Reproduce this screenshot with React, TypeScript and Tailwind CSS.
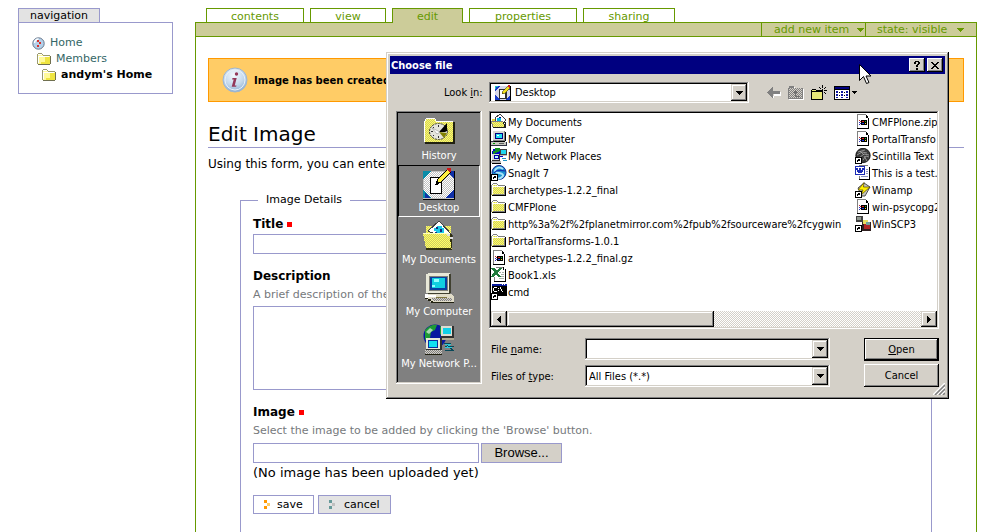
import type { ReactNode } from 'react';

const SUNKEN =
  'p-[2px] shadow-[inset_-1px_-1px_#fff,inset_1px_1px_#808080,inset_-2px_-2px_#d4d0c8,inset_2px_2px_#000]';
const RAISED =
  'bg-[#d4d0c8] shadow-[inset_-1px_-1px_#000,inset_1px_1px_#fff,inset_-2px_-2px_#808080]';
const RAISED_SOFT =
  'bg-[#d4d0c8] shadow-[inset_-1px_-1px_#000,inset_1px_1px_#d4d0c8,inset_-2px_-2px_#808080,inset_2px_2px_#fff]';

type IconProps = { size?: number; height?: number; className?: string; children: ReactNode };

function Icon({ size = 16, height, className = '', children }: IconProps) {
  const h = height ?? size;
  return (
    <svg
      width={size}
      height={h}
      viewBox={`0 0 ${size} ${h}`}
      shapeRendering="crispEdges"
      className={`shrink-0 ${className}`}
      aria-hidden="true"
    >
      {children}
    </svg>
  );
}

function SharedPatterns() {
  return (
    <svg width="0" height="0" className="absolute" aria-hidden="true">
      <defs>
        <pattern id="yellowDither" width="2" height="2" patternUnits="userSpaceOnUse">
          <rect width="2" height="2" fill="#ffff66" />
          <rect width="1" height="1" fill="#d0cc60" />
          <rect x="1" y="1" width="1" height="1" fill="#d0cc60" />
        </pattern>
        <pattern id="greyDither" width="2" height="2" patternUnits="userSpaceOnUse">
          <rect width="2" height="2" fill="#fff" />
          <rect width="1" height="1" fill="#c0c0c0" />
          <rect x="1" y="1" width="1" height="1" fill="#c0c0c0" />
        </pattern>
        <pattern id="trackDither" width="2" height="2" patternUnits="userSpaceOnUse">
          <rect width="2" height="2" fill="#fff" />
          <rect width="1" height="1" fill="#d4d0c8" />
          <rect x="1" y="1" width="1" height="1" fill="#d4d0c8" />
        </pattern>
        <pattern id="darkDither" width="2" height="2" patternUnits="userSpaceOnUse">
          <rect width="2" height="2" fill="#808080" />
          <rect width="1" height="1" fill="#d4d0c8" />
          <rect x="1" y="1" width="1" height="1" fill="#d4d0c8" />
        </pattern>
      </defs>
    </svg>
  );
}

/* ---------- site icons ---------- */

function SiteHomeIcon() {
  return (
    <svg width="13" height="13" viewBox="0 0 13 13" className="shrink-0" aria-hidden="true">
      <circle cx="6.5" cy="6.5" r="5.7" fill="#b4d0ea" stroke="#67778b" />
      <path d="M2.5 6a4 4 0 0 1 4-4" stroke="#fff" strokeWidth="1.5" fill="none" />
      <path
        d="M5 3h2v2H5zM7 5h2v2H7zM5 8h2v2H5z"
        fill="#d8322c"
        shapeRendering="crispEdges"
      />
    </svg>
  );
}

function SiteFolderIcon() {
  return (
    <Icon size={14} height={12}>
      <path d="M1 1h4v1h1v1h7v8H1z" fill="#fffa9a" />
      <path d="M8 4h5v7H4v-2h4z" fill="#efe540" />
      <path d="M1 0h4v1H1zM0 1h1v10H0zM5 1h1v1H5zM6 2h7v1H6z" fill="#9a9a70" />
      <path d="M13 3h1v8h-1zM1 11h12v1H1z" fill="#707050" />
      <path d="M1 1h4v1H1zM1 3h11v1H1zM1 3h1v7H1z" fill="#fff" />
    </Icon>
  );
}

function InfoIcon() {
  return (
    <svg width="26" height="26" viewBox="0 0 26 26" className="shrink-0" aria-hidden="true">
      <defs>
        <radialGradient id="infoGlass" cx="45%" cy="30%" r="70%">
          <stop offset="0" stopColor="#f4f9fe" />
          <stop offset="0.6" stopColor="#c5d9ec" />
          <stop offset="1" stopColor="#8eb0d4" />
        </radialGradient>
      </defs>
      <circle cx="13" cy="13" r="12" fill="url(#infoGlass)" stroke="#9fb6cf" />
      <circle cx="13" cy="13" r="10" fill="none" stroke="#e8f1f9" />
      <circle cx="14.5" cy="7" r="1.7" fill="#93385a" />
      <path d="M10.5 11h4.200l-2 7.500h1.800l-.4 1.300h-4.400l2-7.400h-1.600z" fill="#93385a" />
    </svg>
  );
}

function SubmitMark({ dark, light }: { dark: string; light: string }) {
  return (
    <Icon size={6} height={9}>
      <path d="M0 0h3v3H0zM0 6h3v3H0z" fill={dark} />
      <path d="M3 3h3v3H3z" fill={light} />
    </Icon>
  );
}

function DownArrow({ className = '' }: { className?: string }) {
  return (
    <Icon size={7} height={4} className={className}>
      <path d="M0 0h7v1H0zM1 1h5v1H1zM2 2h3v1H2zM3 3h1v1H3z" fill="currentColor" />
    </Icon>
  );
}

/* ---------- small file icons ---------- */

function FolderIcon() {
  return (
    <Icon>
      <path d="M2 3h4v1h1v1h7v8H1V4h1z" fill="url(#yellowDither)" />
      <path d="M2 1h4v1H2zM1 2h1v1H1zM6 2h1v1H6zM0 3h1v10H0zM7 3h7v1H7z" fill="#808080" />
      <path d="M2 2h4v1H2zM1 4h13v1H1zM1 4h1v8H1z" fill="#fff" />
      <path d="M14 4h1v10h-1zM1 13h14v1H1z" fill="#000" />
      <path d="M13 5h1v8h-1zM2 12h12v1H2z" fill="#808080" />
    </Icon>
  );
}

function DocumentsIcon() {
  return (
    <Icon>
      <path d="M4 4l5-4 6 6-4 5H5z" fill="#fff" stroke="#404040" />
      <path d="M6 4h4v3H6z" fill="#00b4e6" />
      <path d="M8 3h2v1H8zM7 7h2v1H7z" fill="#000080" />
      <path d="M1 5h3v2H1z" fill="#e8d838" />
      <path d="M0 7h12l3 7H3z" fill="url(#yellowDither)" />
      <path d="M0 7h12v1H0zM0 7h1v3H0zM1 10h1v3H1z" fill="#808080" />
      <path d="M2 13h13v1H2zM12 8h1v2h-1zM13 10h1v3h-1zM14 8h1v6h-1z" fill="#202020" />
    </Icon>
  );
}

function ComputerIcon() {
  return (
    <Icon>
      <path d="M2 0h12v10H2z" fill="#808080" />
      <path d="M2 0h11v9H2z" fill="#d8d8d0" />
      <path d="M4 2h8v6H4z" fill="#000080" />
      <path d="M5 3h6v4H5z" fill="#20e0f0" />
      <path d="M6 4h2v1H6z" fill="#fff" />
      <path d="M14 1h1v9h-1zM3 10h11v1H3z" fill="#000" />
      <path d="M0 11h15v3H0z" fill="#c8c8c0" />
      <path d="M0 10h3v1H0zM0 14h15v1H0zM15 11h1v4h-1z" fill="#303040" />
      <path d="M8 12h5v1H8z" fill="#606060" />
      <path d="M2 12h2v1H2z" fill="#00a000" />
    </Icon>
  );
}

function NetworkIcon() {
  return (
    <Icon>
      <path d="M4 0h5v1h2v3h1v5H3V8H1V3h1V1h2z" fill="#0000c8" />
      <path d="M4 0h5v1h1v2H8v1H6v1H4v2H2V3h2z" fill="#109020" />
      <path d="M9 1h7v7H9z" fill="#404040" />
      <path d="M10 2h5v4h-5z" fill="#20d8f0" />
      <path d="M9 7h7v1H9z" fill="#c0c0c0" />
      <path d="M1 6h8v7H1z" fill="#303030" />
      <path d="M1 6h7v6H1z" fill="#d8d8d8" />
      <path d="M3 7h5v4H3z" fill="#0000a0" />
      <path d="M4 8h3v2H4z" fill="#b8f8ff" />
      <path d="M0 13h10v2H0z" fill="#b0b0b0" />
      <path d="M1 15h9v1H1z" fill="#000" />
      <path d="M11 10h4v1h-4zM12 12h4v1h-4z" fill="#2090c0" />
    </Icon>
  );
}

function ShortcutMark() {
  return (
    <>
      <path d="M0 9h7v7H0z" fill="#000" />
      <path d="M1 10h5v5H1z" fill="#fff" />
      <path d="M3 11h2v2H4v-1H3zM2 12h2v1H3v1H2z" fill="#000" />
    </>
  );
}

function SnagItIcon() {
  return (
    <Icon>
      <g shapeRendering="auto">
        <circle cx="8" cy="7.5" r="7" fill="#1c8fd0" stroke="#102a90" />
        <path d="M12 4Q8 1 5 4t3 4 3 4-7 1" fill="none" stroke="#a8e4f8" strokeWidth="2" />
        <path d="M3 8Q6 4 14 6" stroke="#1030b0" strokeWidth="1.2" fill="none" />
      </g>
      <ShortcutMark />
    </Icon>
  );
}

function PageShape() {
  return (
    <>
      <path d="M2 0h9l3 3v12H2z" fill="#fff" />
      <path d="M2 0h9v1H2zM2 0h1v15H2z" fill="#808080" />
      <path d="M13 3h1v12h-1zM2 14h12v1H2zM10 0h1v4h3v-1h-1V2h-1V1h-1V0z" fill="#000" />
    </>
  );
}

function ArchiveIcon() {
  return (
    <Icon>
      <PageShape />
      <path d="M6 6h6v5H6z" fill="#000" />
      <path d="M4 6h1v1H4zM5 7h1v1H5z" fill="#c03030" />
      <path d="M4 8h1v1H4zM5 9h1v1H5zM4 10h1v1H4z" fill="#3030c0" />
      <path d="M7 7h2v1H7z" fill="#e02020" />
      <path d="M10 7h1v1h-1z" fill="#20c020" />
      <path d="M7 9h2v1H7z" fill="#2040e0" />
      <path d="M10 9h1v1h-1z" fill="#f0e020" />
    </Icon>
  );
}

function ExcelIcon() {
  return (
    <Icon>
      <path d="M5 0h8l2 2v13H3V3z" fill="#fff" />
      <path d="M5 0h8v1H5zM3 10h1v5H3z" fill="#808080" />
      <path d="M14 2h1v13h-1zM3 14h12v1H3zM12 0h1v3h-1z" fill="#000" />
      <path d="M8 5h2v1H8zM11 5h2v1h-2zM10 7h3v1h-3zM9 9h4v1H9zM8 11h5v1H8z" fill="#a8b0a8" />
      <path d="M0 1h4l2 3 2-3h3L7 6l3 4H7L5 7l-3 3H0l3-5z" fill="#1f7a3c" />
    </Icon>
  );
}

function CmdIcon() {
  return (
    <Icon>
      <path d="M1 0h15v12H1z" fill="#000" />
      <path d="M1 0h15v2H1z" fill="#0a1c9c" />
      <path d="M11 0h1v1h-1zM13 0h1v1h-1z" fill="#fff" />
      <path d="M3 3h3v1H3zM2 4h1v3H2zM3 7h3v1H3zM7 4h1v1H7zM7 6h1v1H7zM9 3h1v2H9zM10 5h1v2h-1zM11 7h1v1h-1z" fill="#fff" />
      <ShortcutMark />
    </Icon>
  );
}

function ScintillaIcon() {
  return (
    <Icon>
      <g shapeRendering="auto">
        <circle cx="8" cy="7.5" r="7.2" fill="#3c3c3c" stroke="#000" strokeWidth="0.8" />
        <path
          d="M3 4l7-2M2 7l5-3 5 1M4 10l5-4 5 1M8 12l3-4 3 1M5 3l4 4M9 8l3 5"
          fill="none"
          stroke="#a8a8a8"
          strokeWidth="0.8"
        />
      </g>
      <ShortcutMark />
    </Icon>
  );
}

function WordIcon() {
  return (
    <Icon>
      <path d="M4 0h9l2 2v13H4z" fill="#fff" />
      <path d="M4 0h9v1H4zM4 11h1v4H4z" fill="#808080" />
      <path d="M14 2h1v13h-1zM4 14h11v1H4z" fill="#000" />
      <path d="M11 4h2v1h-2zM11 6h2v1h-2zM6 11h7v1H6zM11 8h2v1h-2z" fill="#8890c0" />
      <path d="M0 1h10v9H0z" fill="#1c2cb4" />
      <path d="M1 2h8v7H1z" fill="#fff" />
      <path d="M1 3h2v2h1V3h2v2h1V3h2v2H8v2H7v1H5V6v2H3V7H2V5H1z" fill="#1c2cb4" />
    </Icon>
  );
}

function WinampIcon() {
  return (
    <Icon>
      <g shapeRendering="auto">
        <path d="M3 6l6-5 6 4-5 9H7z" fill="#c8c8c0" stroke="#505050" />
        <path d="M9 .5L8.500 5H15l-9 8 2-5H3z" fill="#fff000" stroke="#504000" strokeWidth="0.7" />
      </g>
      <ShortcutMark />
    </Icon>
  );
}

function WinScpIcon() {
  return (
    <Icon>
      <path d="M1 0h7v6H1z" fill="#404040" />
      <path d="M2 1h4v3H2z" fill="#909890" />
      <path d="M7 6h9v9H7z" fill="#302020" />
      <path d="M8 4h5v4H8z" fill="#e8e060" />
      <path d="M9 8h6v5H9z" fill="#b02828" />
      <path d="M11 6h4v3h-4z" fill="#70a0a0" />
      <ShortcutMark />
    </Icon>
  );
}

function DesktopIcon() {
  return (
    <Icon>
      <path d="M0 1h16v15H0z" fill="#000" />
      <path d="M0 1h15v14H0z" fill="#d8d8e8" />
      <path d="M0 1h5L0 6zM10 15h5v-5zM0 10v5h5zM15 6V4h-1z" fill="#1838c8" />
      <path d="M0 1h3v1H0zM0 2h1v2H0z" fill="#20c0c0" />
      <path d="M4 4h8v10H4z" fill="#303030" />
      <path d="M5 5h5v8H5z" fill="#fff" />
      <path d="M7 9l1-3 5-5 2 2-5 5z" fill="#f0e020" stroke="#403800" strokeWidth="0.6" />
      <path d="M13 0h2v3h-1l-1-1z" fill="#d02020" />
    </Icon>
  );
}

/* ---------- places bar icons ---------- */

function HistoryPlaceIcon() {
  return (
    <Icon size={32}>
      <path d="M3 3h9l2 3h16v20H1V6z" fill="url(#yellowDither)" />
      <path d="M3 2h9v1H3zM2 3h1v2H2zM1 5h1v21H1zM12 3h1v2h-1zM13 5h17v1H13z" fill="#fff" />
      <path d="M30 6h2v21h-2zM2 26h30v2H2z" fill="#202010" />
      <g shapeRendering="auto">
        <ellipse
          cx="15.5"
          cy="15.5"
          rx="9"
          ry="8"
          fill="#e4e4dc"
          stroke="#303030"
          strokeDasharray="2 1"
        />
        <path d="M16 16L24 7v8l-2 1z" fill="#000" />
        <path d="M16 16l8 1-3 5z" fill="#808000" />
        <path d="M15.500 9v2M8 15.500h2M15.500 20v2M10 11l1 1M10 20l1-1" stroke="#303030" />
        <path d="M17 16l-8-4 5 6z" fill="#fff" stroke="#808080" strokeWidth="0.5" />
      </g>
    </Icon>
  );
}

function DesktopPlaceIcon() {
  return (
    <Icon size={32}>
      <path d="M0 3h32v29H0z" fill="#000" />
      <path d="M0 3h31v28H0z" fill="#c0c0c0" />
      <path d="M1 4h30v26H1z" fill="url(#greyDither)" />
      <path d="M0 3h8L0 12zM0 30v-9l8 9z" fill="#0a8ca8" />
      <path d="M31 30h-9l9-9zM31 11l-5-5v-3h5zM2 30v-5l5 5z" fill="#1030a8" />
      <path d="M7 9h12v17H7z" fill="#000" />
      <path d="M8 10h10v15H8z" fill="#fff" />
      <path d="M13 16l2-5L25 1l3 3-10 10z" fill="#ffef40" stroke="#000" />
      <path d="M24 0h4v4h-2l-2-2z" fill="#d01818" />
      <path d="M13 14h2v3h-2z" fill="#000" />
    </Icon>
  );
}

function DocumentsPlaceIcon() {
  return (
    <Icon size={32}>
      <path d="M3 6h6v10H3z" fill="url(#yellowDither)" />
      <path d="M20 6h8v9h-8z" fill="url(#yellowDither)" />
      <path d="M5 11L16 1l14 15-5 4z" fill="#fff" stroke="#404040" />
      <path d="M11 8h3V6h5v2h2v5h-8v-2h-2z" fill="#18c8e8" />
      <path d="M13 7h2v2h-2zM17 9h2v3h-2zM12 12h2v2h-2z" fill="#103080" />
      <path d="M0 13h26l3 16H3z" fill="url(#yellowDither)" />
      <path d="M0 13h26v1H0z" fill="#ffffc0" />
      <path d="M3 28h26v2H3zM26 14h1v8h1v7h1V14z" fill="#303010" />
      <path d="M24 14h3v2h-3zM27 17h3v2h-3z" fill="#e0e0e0" />
    </Icon>
  );
}

function ComputerPlaceIcon() {
  return (
    <Icon size={32}>
      <path d="M3 2l3-1h20l2 2v18H3z" fill="#e8e8d8" />
      <path d="M26 2h2v19h-2zM5 21h22v2H5z" fill="#404030" />
      <path d="M6 4h19v15H6z" fill="#808078" />
      <path d="M7 5h17v13H7z" fill="#0840a0" />
      <path d="M9 6h13v10H9z" fill="#10d0e0" />
      <path d="M11 7h5v3h-5zM9 13h3v2H9z" fill="#90ffff" />
      <path d="M2 22h26l3 3v5H8l-6-4z" fill="#e0dcc8" />
      <path d="M2 22h3v1h8v2H5v1H2z" fill="#fff" />
      <path d="M9 26h20v3H10z" fill="url(#darkDither)" />
      <path d="M2 26h3v1h3v2h2v1h21v1H8v-2H5v-2H2z" fill="#202010" />
      <path d="M13 25h11v1H13z" fill="#807840" />
    </Icon>
  );
}

function NetworkPlaceIcon() {
  return (
    <Icon size={32}>
      <g shapeRendering="auto">
        <circle cx="12" cy="12" r="11.5" fill="#0818a0" />
        <path d="M2 6Q8 0 14 1l-2 5-4 2-1 6-5 2zM17 2l5 5-2 6-3-3z" fill="#1e9a34" />
        <path d="M3 8l4-4 3 2-4 4z" fill="#a8d8b0" />
      </g>
      <path d="M18 2h13v12H18z" fill="#303030" />
      <path d="M18 2h11v10H18z" fill="#dcdcd0" />
      <path d="M20 4h8v6h-8z" fill="#10d0e8" />
      <path d="M17 14h14v2H17z" fill="#b0a890" />
      <path d="M3 14h16v13H3z" fill="#303030" />
      <path d="M3 14h14v11H3z" fill="#e8e8d8" />
      <path d="M5 16h10v8H5z" fill="#0830a0" />
      <path d="M6 17h8v6H6z" fill="#10e0f0" />
      <path d="M2 26h17v4H2z" fill="url(#darkDither)" />
      <path d="M2 30h17v1H2z" fill="#202010" />
      <path d="M21 19h7l-4 3h7M22 26h8l-4-3" fill="none" stroke="#084858" />
      <path d="M22 20h6l-4 3h5" fill="none" stroke="#30c8d8" />
    </Icon>
  );
}

/* ---------- dialog toolbar icons ---------- */

function BackIcon() {
  return (
    <Icon size={14} height={12}>
      <path d="M7 5h7v4H7zM6 11l1-4v4z" fill="#fff" />
      <path d="M0 5h1V4h1V3h1V2h1V1h1V0h1v4h7v3H6v4H5v-1H4V9H3V8H2V7H1V6H0z" fill="#808080" />
    </Icon>
  );
}

function UpFolderIcon() {
  return (
    <Icon size={16} height={14}>
      <path d="M2 1h5v2h9v11H1V3h1z" fill="#fff" />
      <path d="M1 0h5v2h9v11H0V2h1z" fill="#808080" />
      <path d="M1 2h13v10H1z" fill="url(#darkDither)" />
      <path d="M7 4h1v1h1v1h1v1H8v3h4v1H7V7H5V6h1V5h1z" fill="#707070" />
    </Icon>
  );
}

function NewFolderIcon() {
  return (
    <Icon size={16}>
      <path d="M0 5h1V4h4v1h7v10H0z" fill="#000" />
      <path d="M1 5h4v1h6v8H1z" fill="#e8e878" />
      <path d="M1 6h10v1H1z" fill="#000" />
      <path d="M11 0h1v3h-1zM8 2h1v1H8zM9 3h1v1H9zM14 2h1v1h-1zM13 3h1v1h-1zM13 5h3v1h-3zM13 7h1v1h-1zM14 8h1v1h-1zM11 4h1v1h-1zM9 5h1v1H9z" fill="#000" />
    </Icon>
  );
}

function ViewsIcon() {
  return (
    <Icon size={16} height={14}>
      <path d="M0 0h16v14H0z" fill="#000" />
      <path d="M1 1h14v2H1z" fill="#000080" />
      <path d="M1 4h14v9H1z" fill="#fff" />
      <path d="M2 5h2v2H2zM7 5h2v2H7zM12 5h2v2h-2zM2 8h2v2H2zM7 8h2v2H7zM12 8h2v2h-2zM2 11h2v1H2zM7 11h2v1H7zM12 11h2v1h-2z" fill="#1018a0" />
      <path d="M5 6h1v1H5zM10 6h1v1h-1zM5 9h1v1H5zM10 9h1v1h-1z" fill="#000" />
    </Icon>
  );
}

function ResizeGrip() {
  return (
    <Icon size={12}>
      <g shapeRendering="auto" strokeWidth="1.5">
        <path d="M0 12L12 0M4 12l8-8M8 12l4-4" stroke="#fff" />
        <path d="M2 12L12 2M6 12l6-6M10 12l2-2" stroke="#808080" />
      </g>
    </Icon>
  );
}

function MousePointer() {
  return (
    <svg
      width="13"
      height="21"
      viewBox="0 0 13 21"
      className="pointer-events-none absolute left-[859px] top-16"
      aria-hidden="true"
    >
      <path d="M.5 .5v16l4-4 3 7 2.500-1-3-6.500h5z" fill="#fff" stroke="#000" />
    </svg>
  );
}

/* ---------- page ---------- */

const tabs = [
  { label: 'contents', width: 'w-[98px]' },
  { label: 'view', width: 'w-[76px]' },
  { label: 'edit', width: 'w-[71px]', active: true },
  { label: 'properties', width: 'w-[108px]' },
  { label: 'sharing', width: 'w-[92px]' },
];

function Navigation() {
  return (
    <nav className="flex w-[155px] shrink-0 flex-col items-start text-[11px]">
      <h2 className="h-[14px] border border-b-0 border-[#9999cc] bg-[#e3e3e3] px-[11px] leading-[14px]">
        navigation
      </h2>
      <ul className="w-full border border-[#9999cc] pt-3 pb-[10px] pl-[13px] leading-4 text-[#336666]">
        <li>
          <a href="#home" className="flex items-center gap-[5px]">
            <SiteHomeIcon /> Home
          </a>
        </li>
        <li className="pl-[5px]">
          <a href="#members" className="flex items-center gap-[5px]">
            <SiteFolderIcon /> Members
          </a>
        </li>
        <li className="pl-[10px] font-bold text-black">
          <a href="#andym" className="flex items-center gap-[5px]">
            <SiteFolderIcon /> andym's Home
          </a>
        </li>
      </ul>
    </nav>
  );
}

function ContentTabs() {
  return (
    <ul className="flex h-[14px] gap-[6px] pl-[11px] text-[11px] leading-[15px] text-[#669900]">
      {tabs.map((tab) => (
        <li key={tab.label} className={tab.width}>
          <a
            href={`#${tab.label}`}
            className={`block border border-b-0 border-[#669900] text-center ${
              tab.active ? 'relative h-[15px] bg-[#cccc99]' : 'h-[14px]'
            }`}
          >
            {tab.label}
          </a>
        </li>
      ))}
    </ul>
  );
}

function RequiredMark() {
  return <span className="size-[5px] bg-[#ff0000]" title="Required" />;
}

const field = 'block border border-[#9999cc] bg-white outline-none';

function EditForm() {
  return (
    <form className="flex grow flex-col px-8 pt-5">
      <fieldset className="grow border border-b-0 border-[#9999cc] px-3">
        <legend className="ml-[5px] px-2 text-[11px] leading-4">Image Details</legend>
        <div className="flex items-center gap-1 pt-2 text-xs leading-4 font-bold">
          <label htmlFor="title">Title</label>
          <RequiredMark />
        </div>
        <input id="title" className={`${field} mt-[2px] h-5 w-1/2`} />

        <label htmlFor="description" className="mt-[14px] block text-xs leading-4 font-bold">
          Description
        </label>
        <p className="mt-[3px] text-[11px] leading-4 text-[#76797c]">A brief description of the</p>
        <textarea id="description" className={`${field} mt-[3px] h-[84px] w-3/4 resize-none`} />

        <div className="mt-[14px] flex items-center gap-1 text-xs leading-4 font-bold">
          <label htmlFor="image">Image</label>
          <RequiredMark />
        </div>
        <p className="mt-[3px] text-[11px] leading-4 text-[#76797c]">
          Select the image to be added by clicking the 'Browse' button.
        </p>
        <div className="mt-1 flex gap-[2px]">
          <input id="image" className={`${field} h-5 w-[226px]`} />
          <button
            type="button"
            className="h-5 w-[81px] border border-[#9999cc] bg-[#d4d0c8] font-['Liberation_Sans',sans-serif] text-[13px] leading-[18px]"
          >
            Browse...
          </button>
        </div>
        <p className="mt-[2px] text-[13px] leading-4">(No image has been uploaded yet)</p>
        <div className="mt-[14px] flex gap-1 text-[11px] leading-[15px]">
          <button
            type="button"
            className="flex h-[19px] w-[61px] items-center gap-[7px] border border-[#9999cc] bg-white pl-[10px]"
          >
            <SubmitMark dark="#ff9900" light="#ffcc66" /> save
          </button>
          <button
            type="button"
            className="flex h-[19px] w-[73px] items-center gap-[9px] border border-[#9999cc] bg-[#e3e3e3] pl-[10px]"
          >
            <SubmitMark dark="#669999" light="#c0c0c0" /> cancel
          </button>
        </div>
      </fieldset>
    </form>
  );
}

/* ---------- file dialog ---------- */

const places = [
  { label: 'History', icon: <HistoryPlaceIcon /> },
  { label: 'Desktop', icon: <DesktopPlaceIcon />, active: true },
  { label: 'My Documents', icon: <DocumentsPlaceIcon /> },
  { label: 'My Computer', icon: <ComputerPlaceIcon /> },
  { label: 'My Network P...', icon: <NetworkPlaceIcon /> },
];

const firstColumn = [
  { name: 'My Documents', icon: <DocumentsIcon /> },
  { name: 'My Computer', icon: <ComputerIcon /> },
  { name: 'My Network Places', icon: <NetworkIcon /> },
  { name: 'SnagIt 7', icon: <SnagItIcon /> },
  { name: 'archetypes-1.2.2_final', icon: <FolderIcon /> },
  { name: 'CMFPlone', icon: <FolderIcon /> },
  { name: 'http%3a%2f%2fplanetmirror.com%2fpub%2fsourceware%2fcygwin', icon: <FolderIcon /> },
  { name: 'PortalTransforms-1.0.1', icon: <FolderIcon /> },
  { name: 'archetypes-1.2.2_final.gz', icon: <ArchiveIcon /> },
  { name: 'Book1.xls', icon: <ExcelIcon /> },
  { name: 'cmd', icon: <CmdIcon /> },
];

const secondColumn = [
  { name: 'CMFPlone.zip', icon: <ArchiveIcon /> },
  { name: 'PortalTransfo', icon: <ArchiveIcon /> },
  { name: 'Scintilla Text E', icon: <ScintillaIcon /> },
  { name: 'This is a test.', icon: <WordIcon /> },
  { name: 'Winamp', icon: <WinampIcon /> },
  { name: 'win-psycopg2', icon: <ArchiveIcon /> },
  { name: 'WinSCP3', icon: <WinScpIcon /> },
];

function FileColumn({ files, className }: { files: typeof firstColumn; className: string }) {
  return (
    <ul className={className}>
      {files.map((file) => (
        <li key={file.name} className="flex h-[17px] gap-px leading-[17px] whitespace-nowrap">
          {file.icon}
          {file.name}
        </li>
      ))}
    </ul>
  );
}

function ComboArrow() {
  return (
    <span className={`flex w-4 shrink-0 items-center justify-center self-stretch ${RAISED_SOFT}`}>
      <DownArrow />
    </span>
  );
}

function ScrollButton({ label, d }: { label: string; d: string }) {
  return (
    <button
      type="button"
      aria-label={label}
      className={`flex size-4 shrink-0 items-center justify-center ${RAISED_SOFT}`}
    >
      <Icon size={4} height={7}>
        <path d={d} fill="#000" />
      </Icon>
    </button>
  );
}

function ChooseFileDialog() {
  return (
    <section
      role="dialog"
      aria-label="Choose file"
      className="absolute left-[386px] top-[52px] w-[563px] bg-[#d4d0c8] p-1 font-['DejaVu_Sans_Condensed','DejaVu_Sans',sans-serif] text-[11px] leading-[13px] font-stretch-condensed shadow-[inset_-1px_-1px_#000,inset_1px_1px_#d4d0c8,inset_-2px_-2px_#808080,inset_2px_2px_#fff]"
    >
      <header className="flex h-[18px] items-center gap-[2px] bg-[#000080] pr-[2px] pl-px">
        <h2 className="grow font-bold text-white">Choose file</h2>
        <button
          type="button"
          aria-label="Help"
          className={`flex h-[14px] w-4 items-center justify-center ${RAISED}`}
        >
          <Icon size={6} height={9}>
            <path d="M1 0h4v1H1zM0 1h2v2H0zM4 1h2v2H4zM3 3h2v1H3zM2 4h2v2H2zM2 7h2v2H2z" fill="#000" />
          </Icon>
        </button>
        <button
          type="button"
          aria-label="Close"
          className={`flex h-[14px] w-4 items-center justify-center ${RAISED}`}
        >
          <Icon size={8} height={7}>
            <path
              d="M0 0h2v1H0zM6 0h2v1H6zM1 1h2v1H1zM5 1h2v1H5zM2 2h4v1H2zM3 3h2v1H3zM2 4h4v1H2zM1 5h2v1H1zM5 5h2v1H5zM0 6h2v1H0zM6 6h2v1H6z"
              fill="#000"
            />
          </Icon>
        </button>
      </header>

      <div className="flex items-center pt-2 pl-[54px]">
        <label htmlFor="look-in" className="w-[45px]">
          Look <u>i</u>n:
        </label>
        <div className={`flex h-[21px] w-[260px] items-center bg-white ${SUNKEN}`}>
          <span className="pl-1">
            <DesktopIcon />
          </span>
          <select id="look-in" className="grow appearance-none bg-white pl-1 outline-none">
            <option>Desktop</option>
          </select>
          <ComboArrow />
        </div>
        <div className="flex items-center gap-[7px] pl-[18px]">
          <button type="button" aria-label="Back">
            <BackIcon />
          </button>
          <button type="button" aria-label="Up one level">
            <UpFolderIcon />
          </button>
          <button type="button" aria-label="New folder">
            <NewFolderIcon />
          </button>
          <button type="button" aria-label="Views" className="flex items-center gap-[2px]">
            <ViewsIcon />
            <Icon size={5} height={3}>
              <path d="M0 0h5v1H0zM1 1h3v1H1zM2 2h1v1H2z" fill="#000" />
            </Icon>
          </button>
        </div>
      </div>

      <div className="flex gap-[7px] px-[6px] pt-2">
        <nav className={`h-[273px] w-[86px] bg-[#808080] text-white ${SUNKEN}`}>
          {places.map((place) => (
            <button
              key={place.label}
              type="button"
              className={`flex h-[52px] w-full flex-col items-center gap-px border whitespace-nowrap ${
                place.active
                  ? 'border-t-black border-r-white border-b-white border-l-black pt-[2px]'
                  : 'border-transparent pt-[2px]'
              }`}
            >
              {place.icon}
              {place.label}
            </button>
          ))}
        </nav>

        <div className="grow">
          <div className={`flex h-[218px] w-[450px] flex-col bg-white ${SUNKEN}`}>
            <div className="flex grow overflow-hidden pt-px">
              <FileColumn files={firstColumn} className="w-[364px] shrink-0" />
              <FileColumn files={secondColumn} className="w-[82px] shrink-0" />
            </div>
            <div className="flex h-4">
              <ScrollButton label="Scroll left" d="M3 0h1v7H3zM2 1h1v5H2zM1 2h1v3H1zM0 3h1v1H0z" />
              <span className={`w-[207px] ${RAISED_SOFT}`} />
              <svg className="h-4 w-0 grow" shapeRendering="crispEdges" aria-hidden="true">
                <rect width="100%" height="100%" fill="url(#trackDither)" />
              </svg>
              <ScrollButton label="Scroll right" d="M0 0h1v7H0zM1 1h1v5H1zM2 2h1v3H2zM3 3h1v1H3z" />
            </div>
          </div>

          <div className="flex justify-between pt-[9px]">
            <div className="grid grid-cols-[94px_245px] items-center gap-y-[5px] pl-[2px] pb-2">
              <label htmlFor="file-name">
                File <u>n</u>ame:
              </label>
              <div className={`flex h-[22px] bg-white ${SUNKEN}`}>
                <input id="file-name" className="min-w-0 grow bg-white px-[2px] outline-none" />
                <ComboArrow />
              </div>
              <label htmlFor="file-type">
                Files of <u>t</u>ype:
              </label>
              <div className={`flex h-[22px] bg-white ${SUNKEN}`}>
                <select id="file-type" className="grow appearance-none bg-white px-[2px] outline-none">
                  <option>All Files (*.*)</option>
                </select>
                <ComboArrow />
              </div>
            </div>
            <div className="flex w-[75px] flex-col gap-[3px]">
              <button
                type="button"
                className="h-[23px] border border-black bg-[#d4d0c8] shadow-[inset_-1px_-1px_#000,inset_1px_1px_#fff,inset_-2px_-2px_#808080]"
              >
                <u>O</u>pen
              </button>
              <button type="button" className={`h-[23px] ${RAISED}`}>
                Cancel
              </button>
            </div>
          </div>
        </div>
      </div>
      <div className="absolute right-1 bottom-1">
        <ResizeGrip />
      </div>
    </section>
  );
}

export default function App() {
  return (
    <div className="relative flex min-h-screen gap-[22px] bg-white pt-2 pr-[7px] pl-[18px] font-['DejaVu_Sans',sans-serif] text-black">
      <SharedPatterns />
      <Navigation />
      <main className="flex grow flex-col">
        <ContentTabs />
        <div className="flex grow flex-col border border-b-0 border-[#669900]">
          <div className="flex h-[14px] justify-end border-b border-[#669900] bg-[#cccc99] text-[11px] leading-[13px] text-[#669900]">
            <button
              type="button"
              className="flex w-[104px] items-center justify-between border-l border-[#669900] pr-px pl-3"
            >
              add new item <DownArrow />
            </button>
            <button
              type="button"
              className="flex w-[111px] items-center justify-between border-l border-[#669900] pr-3 pl-[11px]"
            >
              state: visible <DownArrow />
            </button>
          </div>
          <div className="flex grow flex-col px-3 pt-[21px]">
            <div className="flex h-11 items-center gap-[6px] border border-[#ff9900] bg-[#ffcc66] px-[13px] text-[10px] font-bold">
              <InfoIcon />
              Image has been created
            </div>
            <h1 className="mt-5 border-b border-[#9999cc] text-xl leading-[25px]">Edit Image</h1>
            <p className="mt-2 text-xs leading-4">Using this form, you can enter</p>
            <EditForm />
          </div>
        </div>
      </main>
      <ChooseFileDialog />
      <MousePointer />
    </div>
  );
}
